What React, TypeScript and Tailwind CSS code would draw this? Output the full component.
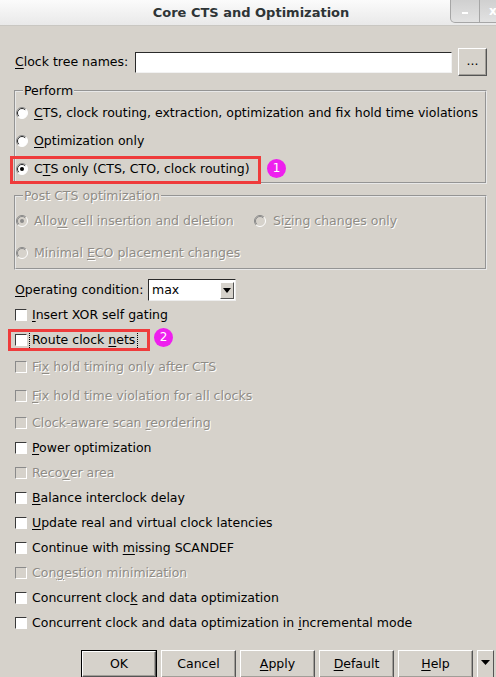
import React from 'react'

const DIS = "text-[#8f8c86] [text-shadow:1px_1px_0_#ffffff]"

function Mn({ text, u, disabled }: { text: string; u?: number; disabled?: boolean }) {
  const cls = disabled ? DIS : 'text-black'
  if (u === undefined) return <span className={`whitespace-nowrap ${cls}`}>{text}</span>
  return (
    <span className={`whitespace-nowrap ${cls}`}>
      {text.slice(0, u)}
      <span className="underline decoration-1 underline-offset-[2px]">{text[u]}</span>
      {text.slice(u + 1)}
    </span>
  )
}

function Radio({ checked, disabled }: { checked?: boolean; disabled?: boolean }) {
  const fill = disabled ? '#d6d2cb' : '#ffffff'
  return (
    <svg width="12" height="12" viewBox="0 0 12 12" className="shrink-0">
      <circle cx="6" cy="6" r="5.5" fill={fill} />
      <path d="M2.1 9.9 A5.5 5.5 0 0 1 9.9 2.1" stroke="#8a8a8a" fill="none" />
      <path d="M2.8 9.2 A4.5 4.5 0 0 1 9.2 2.8" stroke={disabled ? '#8a8a8a' : '#2a2a2a'} fill="none" />
      <path d="M2.1 9.9 A5.5 5.5 0 0 0 9.9 2.1" stroke="#ffffff" fill="none" />
      {checked && <circle cx="6" cy="6" r="2" fill={disabled ? '#8a8a8a' : '#000000'} />}
    </svg>
  )
}

function Check({ disabled }: { disabled?: boolean }) {
  return (
    <div
      className={`w-[12px] h-[12px] shrink-0 border border-t-[#3a3a3a] border-l-[#3a3a3a] border-r-white border-b-white ${
        disabled ? 'bg-[#d6d2cb] border-t-[#8a8a8a] border-l-[#8a8a8a]' : 'bg-white'
      }`}
    />
  )
}

function Badge({ n }: { n: number }) {
  return (
    <div className="w-[19px] h-[19px] rounded-full bg-[#ee1fee] text-white text-[12px] leading-[19px] text-center">
      {n}
    </div>
  )
}

function Btn({ label, u, def }: { label: string; u?: number; def?: boolean }) {
  const inner = (
    <div className="h-full flex items-center justify-center border border-t-white border-l-white border-r-[#555] border-b-[#555] shadow-[inset_-1px_-1px_0_#a19e98]">
      <Mn text={label} u={u} />
    </div>
  )
  if (def) return <div className="w-[76px] h-[28px] border border-black">{inner}</div>
  return <div className="w-[75px] h-[28px]">{inner}</div>
}

const checks: { t: string; u: number; h: string; dis?: boolean; focus?: boolean }[] = [
  { t: 'Insert XOR self gating', u: 0, h: 'h-[24px]' },
  { t: 'Route clock nets', u: 12, h: 'h-[26px]', focus: true },
  { t: 'Fix hold timing only after CTS', u: 2, h: 'h-[28px]', dis: true },
  { t: 'Fix hold time violation for all clocks', u: 0, h: 'h-[29px]', dis: true },
  { t: 'Clock-aware scan reordering', u: 17, h: 'h-[25px]', dis: true },
  { t: 'Power optimization', u: 0, h: 'h-[25px]' },
  { t: 'Recover area', u: 4, h: 'h-[25px]', dis: true },
  { t: 'Balance interclock delay', u: 0, h: 'h-[25px]' },
  { t: 'Update real and virtual clock latencies', u: 0, h: 'h-[25px]' },
  { t: 'Continue with missing SCANDEF', u: 14, h: 'h-[25px]' },
  { t: 'Congestion minimization', u: 3, h: 'h-[25px]', dis: true },
  { t: 'Concurrent clock and data optimization', u: 15, h: 'h-[25px]' },
  { t: 'Concurrent clock and data optimization in incremental mode', u: 42, h: 'h-[25px]' },
]

export default function App() {
  return (
    <div className="w-[496px] h-[677px] overflow-hidden bg-[#d6d2cb] font-['DejaVu_Sans',sans-serif] text-[12.5px] leading-[16px] text-black">
      {/* title bar */}
      <div className="relative h-[26px] flex items-center justify-center bg-gradient-to-b from-[#fbfbfb] to-[#e9e9e9] border-b border-[#c9c7c2]">
        <span className="font-bold text-[13px] text-[#2e3436] ml-[6px]">Core CTS and Optimization</span>
        <div className="absolute left-[450px] top-0 w-[60px] h-[23px] flex rounded-bl-[5px] border border-t-0 border-[#a6a6a6] bg-gradient-to-b from-[#d0d0d0] to-[#e2e2e2] overflow-hidden">
          <div className="w-[29px] h-full border-r border-[#a6a6a6] flex items-center justify-center">
            <div className="w-[6px] h-[2px] bg-white mt-[4px]" />
          </div>
          <div className="flex-1 flex items-center pl-[9px] text-white font-bold text-[12px]">x</div>
        </div>
      </div>

      {/* clock tree names */}
      <div className="mt-[22px] h-[28px] flex items-center pl-[15px]">
        <div className="w-[120px]">
          <Mn text="Clock tree names:" u={0} />
        </div>
        <div className="w-[317px] h-[21px] bg-white border border-t-[#2a2a2a] border-l-[#2a2a2a] border-r-[#f2f2f2] border-b-[#f2f2f2] mt-[1px]" />
        <div className="ml-[6px] w-[29px] h-[28px] flex items-center justify-center border border-t-white border-l-white border-r-[#555] border-b-[#555] shadow-[inset_-1px_-1px_0_#a19e98] pb-[3px]">
          ...
        </div>
      </div>

      {/* perform */}
      <fieldset className="mt-[7px] ml-[14px] w-[473px] border-2 [border-style:groove] border-[#e8e8e8]">
        <legend className="ml-[7px] px-[1px] leading-[16px]">Perform</legend>
        <div className="h-[28px] flex items-center gap-[6px]">
          <Radio />
          <Mn text="CTS, clock routing, extraction, optimization and fix hold time violations" u={0} />
        </div>
        <div className="h-[28px] flex items-center gap-[6px]">
          <Radio />
          <Mn text="Optimization only" u={0} />
        </div>
        <div className="relative h-[27px] flex items-center gap-[6px]">
          <Radio checked />
          <Mn text="CTS only (CTS, CTO, clock routing)" u={1} />
          <div className="absolute left-[-6px] top-[1px] w-[251px] h-[28px] border-[3px] border-[#ef3b3b]" />
          <div className="absolute left-[251px] top-[4px]">
            <Badge n={1} />
          </div>
        </div>
      </fieldset>

      {/* post cts */}
      <fieldset className="mt-[4px] ml-[14px] w-[473px] border-2 [border-style:groove] border-[#e8e8e8]">
        <legend className={`ml-[7px] px-[1px] leading-[16px] ${DIS}`}>Post CTS optimization</legend>
        <div className="h-[34px] flex items-center">
          <div className="w-[238px] flex items-center gap-[6px]">
            <Radio checked disabled />
            <Mn text="Allow cell insertion and deletion" u={4} disabled />
          </div>
          <div className="flex items-center gap-[7px]">
            <Radio disabled />
            <Mn text="Sizing changes only" u={2} disabled />
          </div>
        </div>
        <div className="h-[30px] flex items-center gap-[6px]">
          <Radio disabled />
          <Mn text="Minimal ECO placement changes" u={8} disabled />
        </div>
      </fieldset>

      {/* operating condition */}
      <div className="mt-[9px] h-[22px] flex items-center pl-[15px]">
        <div className="w-[133px]">
          <Mn text="Operating condition:" u={0} />
        </div>
        <div className="w-[88px] h-[22px] flex items-center bg-white border border-t-[#2a2a2a] border-l-[#2a2a2a] border-r-[#eeeeee] border-b-[#eeeeee]">
          <span className="flex-1 pl-[3px]">max</span>
          <div className="w-[14px] h-[17px] mr-[1px] flex items-center justify-center bg-[#d6d2cb] border border-t-white border-l-white border-r-[#555] border-b-[#555]">
            <svg width="8" height="5" viewBox="0 0 8 5">
              <path d="M0 0 H8 L4 5 Z" fill="#000" />
            </svg>
          </div>
        </div>
      </div>

      {/* checkboxes */}
      <div className="mt-[2px] flex flex-col">
        {checks.map((c) => (
          <div key={c.t} className={`relative ${c.h} flex items-center pl-[15px]`}>
            <Check disabled={c.dis} />
            {c.focus ? (
              <span className="ml-[2px] h-[20px] flex items-center px-[2px] border border-dotted border-black">
                <Mn text={c.t} u={c.u} />
              </span>
            ) : (
              <span className="ml-[5px]">
                <Mn text={c.t} u={c.u} disabled={c.dis} />
              </span>
            )}
            {c.focus && (
              <>
                <div className="absolute left-[8px] top-[2px] w-[142px] h-[22px] border-[3px] border-[#ef3b3b]" />
                <div className="absolute left-[154px] top-[1px]">
                  <Badge n={2} />
                </div>
              </>
            )}
          </div>
        ))}
      </div>

      {/* buttons */}
      <div className="mt-[15px] flex gap-[4px] pl-[81px]">
        <Btn label="OK" def />
        <Btn label="Cancel" />
        <Btn label="Apply" u={0} />
        <Btn label="Default" u={0} />
        <Btn label="Help" u={0} />
        <div className="w-[17px] h-[28px] flex items-start justify-center pt-[9px] border border-t-white border-l-white border-r-[#555] border-b-[#555]">
          <svg width="9" height="5" viewBox="0 0 9 5">
            <path d="M0 0 H9 L4.5 5 Z" fill="#000" />
          </svg>
        </div>
      </div>
    </div>
  )
}
